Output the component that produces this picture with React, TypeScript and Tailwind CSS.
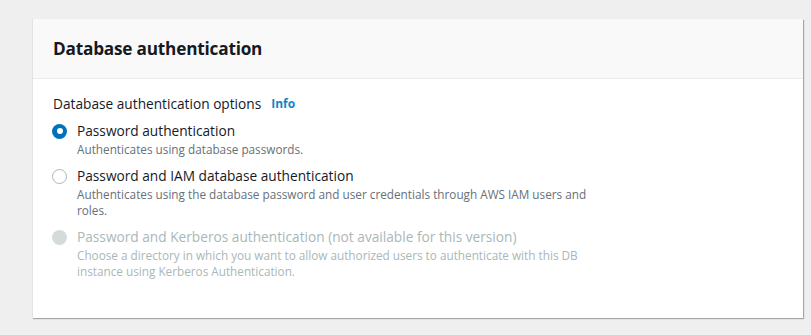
import React from "react";

const font = { fontFamily: '"Open Sans", "Noto Sans", Arial, sans-serif' };

type Opt = {
  label: string;
  desc: string;
  checked?: boolean;
  disabled?: boolean;
};

const options: Opt[] = [
  { label: "Password authentication", desc: "Authenticates using database passwords.", checked: true },
  {
    label: "Password and IAM database authentication",
    desc: "Authenticates using the database password and user credentials through AWS IAM users and roles.",
  },
  {
    label: "Password and Kerberos authentication (not available for this version)",
    desc: "Choose a directory in which you want to allow authorized users to authenticate with this DB instance using Kerberos Authentication.",
    disabled: true,
  },
];

function Radio({ checked, disabled }: { checked?: boolean; disabled?: boolean }) {
  if (disabled) {
    return <span className="mt-[3px] block h-[15px] w-[15px] shrink-0 rounded-full bg-[#d5dbdb]" />;
  }
  if (checked) {
    return (
      <span className="mt-[3px] flex h-[15px] w-[15px] shrink-0 items-center justify-center rounded-full bg-[#0073bb]">
        <span className="block h-[6px] w-[6px] rounded-full bg-white" />
      </span>
    );
  }
  return <span className="mt-[3px] block h-[15px] w-[15px] shrink-0 rounded-full border-[1.5px] border-[#aab7b8] bg-white" />;
}

export default function App() {
  return (
    <div className="h-[335px] w-[811px] bg-[#efefef] pl-8 pr-2 pt-[19px]" style={font}>
      <div className="h-[299px] border-l border-[#e3e3e3] bg-white shadow-[1px_1px_1px_0_rgba(0,0,0,0.3)]">
        <div className="flex h-[60px] items-center border-b border-[#eaeded] bg-[#f9f9f9] px-5">
          <h2 className="text-[17.2px] font-bold tracking-[-0.2px] text-[#16191f]">Database authentication</h2>
        </div>
        <div className="px-5 pt-[15px]">
          <div className="flex items-center gap-[10px] text-[13.7px] text-[#16191f]">
            <span>Database authentication options</span>
            <span className="text-[12px] font-bold text-[#1185c4]">Info</span>
          </div>
          <div className="mt-[6px] flex flex-col gap-[9px]">
            {options.map((o) => (
              <div key={o.label} className="-ml-px flex gap-[10px]">
                <Radio checked={o.checked} disabled={o.disabled} />
                <div className="max-w-[515px]">
                  <div className={`text-[13.7px] leading-[20px] ${o.disabled ? "text-[#aab7b8]" : "text-[#16191f]"}`}>
                    {o.label}
                  </div>
                  <div className={`text-[11.75px] leading-[16px] ${o.disabled ? "text-[#aab7b8]" : "text-[#687078]"}`}>
                    {o.desc}
                  </div>
                </div>
              </div>
            ))}
          </div>
        </div>
      </div>
    </div>
  );
}
